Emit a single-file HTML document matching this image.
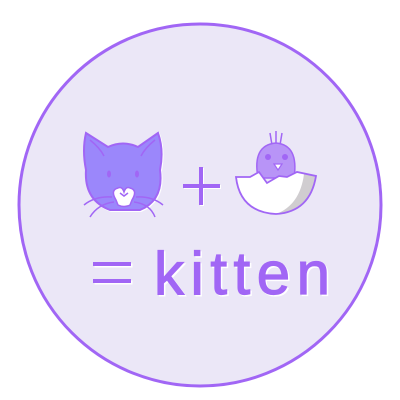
<!DOCTYPE html>
<html><head><style>
html,body{margin:0;padding:0;background:#fff;width:400px;height:400px;overflow:hidden}
</style></head><body>
<svg width="400" height="400" viewBox="0 0 400 400" xmlns="http://www.w3.org/2000/svg">
<circle cx="200" cy="205" r="181" fill="#ebe7f7" stroke="#a166f5" stroke-width="3"/>
<!-- cat -->
<g transform="translate(1,1)" fill="none" stroke="#fff" stroke-width="2">
<path d="M86 133 L108 147 Q123 140 138 147 L158 133 Q164 150 160 170 Q164 200 140 210 L110 210 Q84 200 86 170 Q82 150 86 133Z"/>
</g>
<path d="M86 133 L108 147 Q123 140 138 147 L158 133 Q164 150 160 170 Q164 200 140 210 L110 210 Q84 200 86 170 Q82 150 86 133Z" fill="#9b87fb" stroke="#a166f5" stroke-width="2"/>
<path d="M90 140 Q100 148 104 156 M155 140 Q145 148 141 156" fill="none" stroke="#a166f5" stroke-width="1.5"/>
<ellipse cx="109" cy="174" rx="2" ry="3.5" fill="#a166f5"/>
<ellipse cx="137" cy="174" rx="2" ry="3.5" fill="#a166f5"/>
<path d="M116 200 Q110 190 118 188 Q122 186 124 192 Q126 186 130 188 Q138 190 132 200 L130 205 Q124 208 118 205Z" fill="#fff" stroke="#a166f5" stroke-width="1.5"/>
<path d="M120 193 L124 196 L128 193" fill="none" stroke="#a166f5" stroke-width="1.5"/>
<path d="M84 205 Q95 196 112 197 M90 217 Q98 204 114 202 M163 205 Q152 196 136 197 M155 217 Q150 204 134 202" fill="none" stroke="#a166f5" stroke-width="1.5"/>
<!-- plus -->
<path d="M183 186 H220 M201 167 V205" stroke="#fff" stroke-width="4" transform="translate(1,1)"/>
<path d="M183 186 H220 M201 167 V205" stroke="#a166f5" stroke-width="4"/>
<!-- chick -->
<path d="M272 145 L270 133 M276 144 L276 131 M280 145 L282 133" stroke="#a166f5" stroke-width="1.5"/>
<path d="M258 178 Q252 145 276 143 Q299 145 294 178Z" fill="#b894f7" stroke="#a166f5" stroke-width="1.5"/>
<circle cx="268" cy="157" r="3" fill="#a166f5"/>
<circle cx="285" cy="157" r="3" fill="#a166f5"/>
<path d="M274 164 L282 164 L278 170Z" fill="#fff" stroke="#a166f5" stroke-width="1.2"/>
<path d="M236 177 L250 177 L259 172 L267 183 L279 176 L287 177 L297 172 L316 176 Q310 212 276 214 Q240 212 236 177Z" fill="#fff"/>
<path d="M304 174 L316 176 Q310 212 276 214 Q300 205 304 174Z" fill="#d0cdd0"/>
<path d="M236 177 L250 177 L259 172 L267 183 L279 176 L287 177 L297 172 L316 176 Q310 212 276 214 Q240 212 236 177Z" fill="none" stroke="#a166f5" stroke-width="1.8"/>
<!-- equals -->
<path d="M93 264 H131 M93 281 H131" stroke="#fff" stroke-width="4" transform="translate(1.5,1.5)"/>
<path d="M93 264 H131 M93 281 H131" stroke="#a166f5" stroke-width="4"/>
<!-- text -->
<text x="154" y="294" font-family="Liberation Sans, sans-serif" font-size="60" fill="#fff" stroke="#fff" stroke-width="1.2" textLength="176" transform="translate(1.5,1.5)">kitten</text>
<text x="154" y="294" font-family="Liberation Sans, sans-serif" font-size="60" fill="#a166f5" stroke="#a166f5" stroke-width="1.2" textLength="176">kitten</text>
</svg>
</body></html>
